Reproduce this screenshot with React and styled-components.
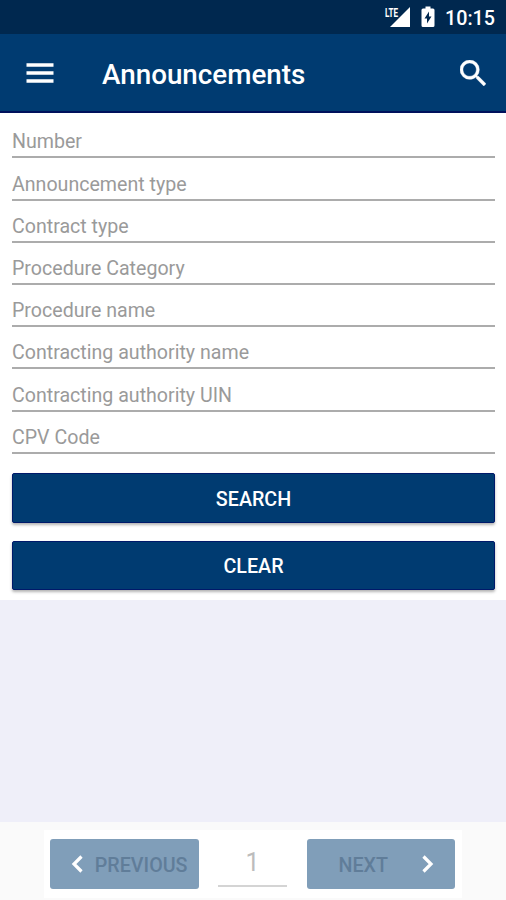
import styled, { createGlobalStyle } from "styled-components"

const fields = [
    "Number",
    "Announcement type",
    "Contract type",
    "Procedure Category",
    "Procedure name",
    "Contracting authority name",
    "Contracting authority UIN",
    "CPV Code",
]

export default function App(){
    return(
        <>
        <GlobalStyle />
        <Screen>
            <StatusBar>
                <svg width="27" height="22" viewBox="0 0 27 22">
                    <path d="M26 1V21H6Z" fill="#fff" />
                    <text x="1" y="10.500" textLength="13" lengthAdjust="spacingAndGlyphs" fontSize="13" fontWeight="700" fill="#fff" stroke="#00284f" strokeWidth="1" paintOrder="stroke">LTE</text>
                </svg>
                <BatteryIcon width="14" height="22" viewBox="0 0 14 22">
                    <path d="M4.500 .5h5v2H12a1.500 1.500 0 0 1 1.500 1.500v15.500A1.500 1.500 0 0 1 12 21H2A1.500 1.500 0 0 1 .5 19.500V4A1.500 1.500 0 0 1 2 2.500h2.500z" fill="#fff" />
                    <path d="M8 5.500v5h2.500L6 17.500v-5H3.500z" fill="#00284f" />
                </BatteryIcon>
                <Clock>10:15</Clock>
            </StatusBar>
            <AppBar>
                <svg width="28" height="20" viewBox="0 0 28 20">
                    <path d="M.5 2h27M.5 10h27M.5 18h27" stroke="#fff" strokeWidth="3.500" />
                </svg>
                <Title>Announcements</Title>
                <svg width="26" height="26" viewBox="3 3 17.500 17.500">
                    <path fill="#fff" stroke="#fff" strokeWidth=".3" d="M15.500 14h-.79l-.28-.27A6.471 6.471 0 0 0 16 9.500 6.500 6.500 0 1 0 9.500 16c1.610 0 3.090-.59 4.230-1.570l.27.28v.79l5 4.990L20.490 19l-4.990-5zm-6 0C7.010 14 5 11.990 5 9.500S7.010 5 9.500 5 14 7.010 14 9.500 11.990 14 9.500 14z" />
                </svg>
            </AppBar>
            <Form>
                {fields.map((name) => <Field key={name} placeholder={name} aria-label={name} />)}
                <Actions>
                    <Button>SEARCH</Button>
                    <Button>CLEAR</Button>
                </Actions>
            </Form>
            <Results />
            <Footer>
                <Pager>
                    <PageButton disabled $pad="0 11px 0 21px">
                        <Chevron d="M10.500 1.500L3 9l7.500 7.500" />
                        <span>PREVIOUS</span>
                    </PageButton>
                    <PageNumber defaultValue="1" aria-label="Page" />
                    <PageButton disabled $pad="0 21px 0 32px">
                        <span>NEXT</span>
                        <Chevron d="M2.500 1.500L10 9l-7.500 7.500" />
                    </PageButton>
                </Pager>
            </Footer>
        </Screen>
        </>
    )
}

function Chevron({ d }){
    return(
        <svg width="13" height="18" viewBox="0 0 13 18">
            <path d={d} fill="none" stroke="#fff" strokeWidth="3.200" />
        </svg>
    )
}

const GlobalStyle=createGlobalStyle`
    *{
        box-sizing:border-box;
    }
    body{
        margin:0;
        font-family:Roboto, sans-serif;
    }
    svg{
        display:block;
        flex-shrink:0;
    }
`
const Screen=styled.div`
    display:flex;
    flex-direction:column;
    width:506px;
    height:900px;
    overflow:hidden;
    background-color:#fff;
`
const StatusBar=styled.div`
    display:flex;
    justify-content:flex-end;
    align-items:center;
    height:34px;
    padding-right:11px;
    background-color:#00284f;
`
const BatteryIcon=styled.svg`
    margin:0 10px;
`
const Clock=styled.div`
    width:50px;
    padding-top:2px;
    font-size:19.700px;
    font-weight:500;
    color:#fff;
    text-align:right;
`
const AppBar=styled.div`
    display:flex;
    align-items:center;
    height:79px;
    padding:1px 20px 0 26px;
    background-color:#003b71;
    border-bottom:2px solid #00115c;
`
const Title=styled.div`
    flex:1;
    padding:3px 0 0 48px;
    font-size:27.800px;
    font-weight:500;
    color:#fff;
`
const Form=styled.div`
    display:flex;
    flex-direction:column;
    height:487px;
    padding:3.300px 11px 0 12px;
`
const Field=styled.input`
    height:42.200px;
    flex-shrink:0;
    padding:11px 0 0;
    border:none;
    border-bottom:2px solid #acacac;
    outline:none;
    background:none;
    font-family:inherit;
    font-size:19.600px;
    &::placeholder{
        color:#9a9a9a;
        opacity:1;
    }
`
const Actions=styled.div`
    display:flex;
    flex-direction:column;
    gap:18px;
    padding-top:19.500px;
`
const Button=styled.button`
    height:49.500px;
    padding:2px 0 0;
    border:1px solid #00196a;
    border-radius:2px;
    background-color:#003b71;
    box-shadow:0 2px 3px rgba(0,0,0,0.3);
    font-family:inherit;
    font-size:19.700px;
    font-weight:500;
    color:#fff;
`
const Results=styled.div`
    flex:1;
    background-color:#efeff9;
`
const Footer=styled.div`
    display:flex;
    justify-content:center;
    height:78px;
    padding-top:8px;
    background-color:#fafafa;
`
const Pager=styled.div`
    display:flex;
    justify-content:space-between;
    width:418px;
    height:68px;
    padding:9px 7px 0 6px;
    background-color:#fff;
`
const PageButton=styled.button`
    display:flex;
    justify-content:space-between;
    align-items:center;
    width:148.500px;
    height:50px;
    padding:${(props) => props.$pad};
    border:none;
    border-radius:3px;
    background-color:#809eb9;
    font-family:inherit;
    font-size:19.700px;
    font-weight:500;
    color:#607d99;
    span{
        padding-top:2px;
    }
`
const PageNumber=styled.input`
    width:69px;
    height:48px;
    padding:1px 0 0;
    border:none;
    border-bottom:2px solid #d4d4d4;
    outline:none;
    background:none;
    font-family:inherit;
    font-size:25px;
    text-align:center;
    color:#bcbcbc;
`
